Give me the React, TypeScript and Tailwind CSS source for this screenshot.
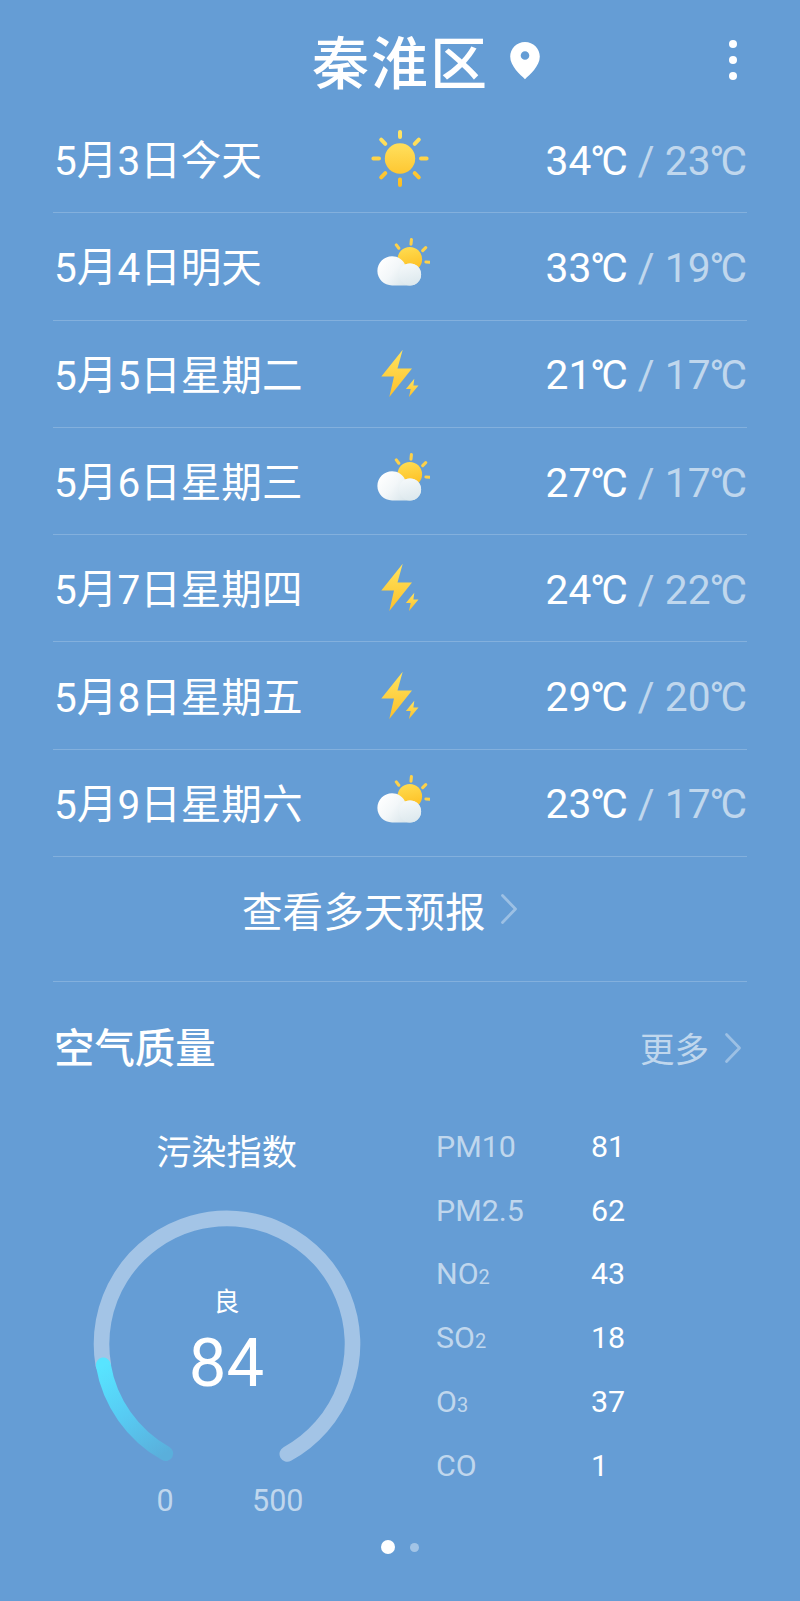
import React from "react";

type Kind = "sun" | "cloud" | "bolt";

const days: { date: string; kind: Kind; high: number; low: number }[] = [
  { date: "5月3日今天", kind: "sun", high: 34, low: 23 },
  { date: "5月4日明天", kind: "cloud", high: 33, low: 19 },
  { date: "5月5日星期二", kind: "bolt", high: 21, low: 17 },
  { date: "5月6日星期三", kind: "cloud", high: 27, low: 17 },
  { date: "5月7日星期四", kind: "bolt", high: 24, low: 22 },
  { date: "5月8日星期五", kind: "bolt", high: 29, low: 20 },
  { date: "5月9日星期六", kind: "cloud", high: 23, low: 17 },
];

const pollutants: { name: string; sub?: string; value: number }[] = [
  { name: "PM10", value: 81 },
  { name: "PM2.5", value: 62 },
  { name: "NO", sub: "2", value: 43 },
  { name: "SO", sub: "2", value: 18 },
  { name: "O", sub: "3", value: 37 },
  { name: "CO", value: 1 },
];

function Gradients() {
  return (
    <svg width="0" height="0" className="absolute">
      <defs>
        <linearGradient id="sun" gradientUnits="userSpaceOnUse" x1="0" y1="0" x2="0" y2="60">
          <stop offset="0" stopColor="#ffe566" />
          <stop offset="0.35" stopColor="#ffdb55" />
          <stop offset="1" stopColor="#fdbb1c" />
        </linearGradient>
        <linearGradient id="sunSmall" x1="0.4" y1="0" x2="0.6" y2="1">
          <stop offset="0" stopColor="#ffdc50" />
          <stop offset="1" stopColor="#fdbd20" />
        </linearGradient>
        <linearGradient id="cloud" gradientUnits="userSpaceOnUse" x1="12" y1="28" x2="38" y2="50">
          <stop offset="0" stopColor="#ffffff" />
          <stop offset="0.5" stopColor="#f3f7f9" />
          <stop offset="1" stopColor="#dbe7ec" />
        </linearGradient>
        <linearGradient id="puff" gradientUnits="userSpaceOnUse" x1="36" y1="34" x2="42" y2="56">
          <stop offset="0" stopColor="#f4f8fa" />
          <stop offset="1" stopColor="#dce8ed" />
        </linearGradient>
        <linearGradient id="bolt" x1="0" y1="0" x2="0" y2="1">
          <stop offset="0" stopColor="#ffe45f" />
          <stop offset="1" stopColor="#fdc02a" />
        </linearGradient>
      </defs>
    </svg>
  );
}

function WeatherIcon({ kind }: { kind: Kind }) {
  if (kind === "sun") {
    return (
      <svg width="60" height="60" viewBox="0 0.5 60 60">
        <circle cx="30" cy="30" r="15.2" fill="url(#sun)" />
        <path
          d="M30.01 3.400V8.500M30 51v5.600M3.400 30H9M51 30h5.600M11.200 11.200l4.100 4.100M44.700 44.700l4.100 4.100M11.200 48.800l4.100-4.100M44.700 15.300l4.100-4.100"
          stroke="url(#sun)"
          strokeWidth="4"
          strokeLinecap="round"
          fill="none"
        />
      </svg>
    );
  }
  if (kind === "cloud") {
    return (
      <svg width="60" height="60" viewBox="-0.4 6.3 60 60">
        <circle cx="39.400" cy="29.500" r="12.300" fill="url(#sunSmall)" />
        <path
          d="M40.600 14.400l.4-4.500M52.300 20.900l3-3M55.500 32.300l3.900.2M28.400 18.500l-2.500-3.300"
          stroke="#fdd14a"
          strokeWidth="3.100"
          strokeLinecap="round"
          fill="none"
        />
        <path
          d="M21.700 55.700C13.600 55.700 7 49.300 7 41.300S13.600 26.600 21.700 26.600c5.800 0 10.500 3.200 12.900 8.100 1.700-.7 3.100-1 4.900-1 6.200 0 11.200 4.900 11.200 11s-5 11-11.200 11z"
          fill="url(#cloud)"
        />
        <circle cx="39.700" cy="44.700" r="11" fill="url(#puff)" />
      </svg>
    );
  }
  return (
    <svg width="60" height="60" viewBox="0 1.5 60 60">
      <path d="M32.700 7.200L11.300 33.900H24L19.300 54.500 42 26H27.500z" fill="url(#bolt)" />
      <path d="M44.300 36.200L35.900 46.500h4.800L39 54.500l9.500-11.400h-5.100z" fill="url(#bolt)" />
    </svg>
  );
}

function Celsius({ value }: { value: number }) {
  return (
    <>
      {value}
      <span className="-ml-[1.2px] tracking-[-4px]">°</span>C
    </>
  );
}

function Chevron() {
  return (
    <svg width="20" height="34" viewBox="0 0 20 34" fill="none">
      <path d="M3.500 3.500L16.500 17 3.500 30.500" stroke="#fff" strokeOpacity="0.36" strokeWidth="2.800" strokeLinecap="round" strokeLinejoin="round" />
    </svg>
  );
}

function Gauge() {
  return (
    <svg width="272" height="260" viewBox="0 0 272 260" fill="none">
      <defs>
        <linearGradient id="level" gradientUnits="userSpaceOnUse" x1="18" y1="154" x2="74" y2="246">
          <stop offset="0" stopColor="#58e4ff" />
          <stop offset="0.5" stopColor="#57cbf3" />
          <stop offset="1" stopColor="#5aafdb" />
        </linearGradient>
      </defs>
      <path d="M12.300 157A125.500 125.500 0 1 1 196.300 246" stroke="#a3c4e6" strokeWidth="15.600" strokeLinecap="round" />
      <path d="M74.700 245.500A125.500 125.500 0 0 1 12.300 157" stroke="url(#level)" strokeWidth="15" strokeLinecap="round" />
    </svg>
  );
}

export default function App() {
  return (
    <div className="flex h-[1601px] w-[800px] flex-col overflow-hidden bg-[#659dd5] font-['Roboto','Noto_Sans_CJK_SC',sans-serif] text-white">
      <Gradients />
      <header className="flex h-[106px] shrink-0 items-start pl-[312px]">
        <h1 className="w-[174px] pt-[21px] text-[57px] leading-[88px] font-medium tracking-[2px] whitespace-nowrap">秦淮区</h1>
        <svg className="mt-[42px] ml-[24px]" width="30" height="38" viewBox="0 0 30 38">
          <path
            fillRule="evenodd"
            fill="#fff"
            d="M15 0C6.700 0 .2 6.500.2 14.600.2 24.500 10.500 32.800 15 37.300 19.500 32.800 29.800 24.500 29.800 14.600 29.800 6.500 23.300 0 15 0zM15 9.200a4.300 4.300 0 1 1 0 8.600 4.300 4.300 0 0 1 0-8.600z"
          />
        </svg>
        <div className="mt-[40px] ml-auto mr-[63px] flex flex-col gap-2">
          <span className="size-2 rounded-full bg-white" />
          <span className="size-2 rounded-full bg-white" />
          <span className="size-2 rounded-full bg-white" />
        </div>
      </header>

      <main className="px-[53px]">
        {days.map((d) => (
          <div key={d.date} className="flex h-[107.300px] items-center border-b border-white/20">
            <span className="w-[317px] pt-1 pl-px text-[40.600px] leading-[60px]">{d.date}</span>
            <WeatherIcon kind={d.kind} />
            <span className="ml-auto pt-[3px] text-[40.700px] leading-[60px] whitespace-pre">
              <Celsius value={d.high} />
              <span className="text-white/60"> / <Celsius value={d.low} /></span>
            </span>
          </div>
        ))}

        <div className="flex h-[125px] items-center border-b border-white/20 pb-[17px] pl-[189px]">
          <span className="pt-1 text-[40.600px] leading-[60px]">查看多天预报</span>
          <span className="ml-[14px] pb-1"><Chevron /></span>
        </div>

        <div className="flex h-[132px] items-center justify-between">
          <h2 className="pt-1 pl-px text-[40.400px] leading-[60px] font-medium">空气质量</h2>
          <div className="flex items-center gap-[14px] pr-[4px]">
            <span className="pt-1 text-[34.500px] leading-[50px] text-white/60">更多</span>
            <Chevron />
          </div>
        </div>

        <div className="flex">
          <section className="flex w-[347px] flex-col items-center">
            <h3 className="mt-[14px] text-[35.200px] leading-[50px]">污染指数</h3>
            <div className="mt-[30px] grid">
              <div className="col-start-1 row-start-1"><Gauge /></div>
              <div className="col-start-1 row-start-1 flex flex-col items-center pt-[76px]">
                <span className="text-[26px] leading-[36px]">良</span>
                <span className="mt-[5px] text-[67px] leading-[76px]">84</span>
              </div>
            </div>
            <div className="mt-[13px] ml-[7px] flex w-[147px] justify-between text-[30.500px] leading-[40px] text-white/60">
              <span>0</span>
              <span>500</span>
            </div>
          </section>
          <section className="pt-[13px] pl-[36px]">
            {pollutants.map((p) => (
              <div key={p.name} className="flex h-[63.700px] items-baseline text-[30.400px] leading-[40px]">
                <span className="w-[155px] text-white/60">
                  {p.name}
                  {p.sub && <span className="text-[20px]">{p.sub}</span>}
                </span>
                <span>{p.value}</span>
              </div>
            ))}
          </section>
        </div>
      </main>

      <div className="mt-auto mb-[47px] flex items-center gap-[15px] pl-[381px]">
        <span className="size-[14px] rounded-full bg-white" />
        <span className="size-[9px] rounded-full bg-white/40" />
      </div>
    </div>
  );
}
